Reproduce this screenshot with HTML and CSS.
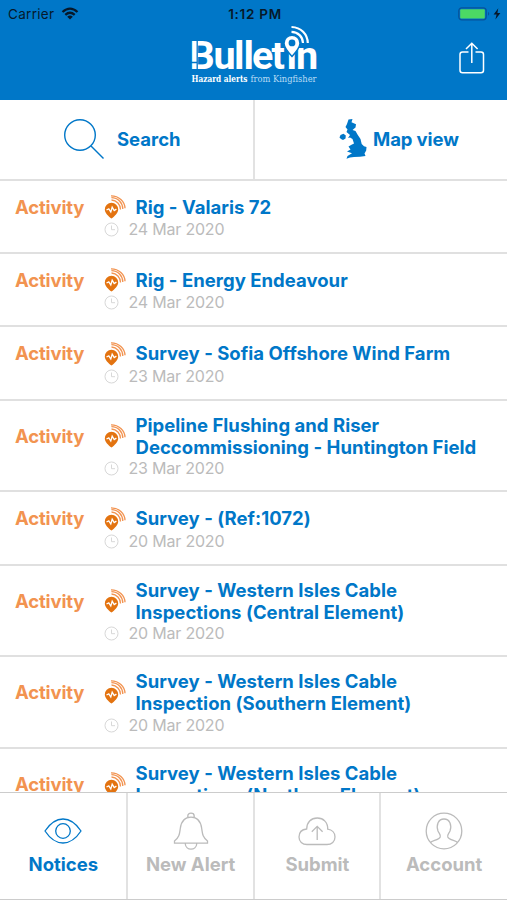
FILE: index.html
```html
<!DOCTYPE html>
<html lang="en">
<head>
  <meta charset="utf-8">
  <title>Bulletin</title>
  <link rel="stylesheet" href="styles.css">
</head>
<body>
  <!-- shared icons -->
  <svg class="sprite">
    <symbol id="icon-pin" viewBox="0 0 22 24">
      <path d="M7.500 7.800a6.700 6.700 0 0 1 6.700 6.700c0 3.500-3.600 6.700-6.700 9.100C4.400 21.200.8 18 .8 14.500A6.700 6.700 0 0 1 7.500 7.800z" fill="#e37310"/>
      <path d="M2.500 15l2.300-1.200 2 3.200 1.400-4.800 2 3.300 2.200-1.400" fill="none" stroke="#fff" stroke-width="1.300"/>
      <path d="M7.500 5a9.500 9.500 0 0 1 9 9.600M7.400 2.700C14 2.800 18.700 7.500 18.800 14M7 .8C14.800.7 20.900 6.500 21 13.300" fill="none" stroke="#f29350" stroke-width="1.300"/>
    </symbol>
    <symbol id="icon-clock" viewBox="0 0 15 15">
      <circle cx="7.500" cy="7.500" r="6.500" fill="none" stroke="#d8d8d8"/>
      <path d="M7.500 3.500v4.200h3.500" fill="none" stroke="#d8d8d8"/>
    </symbol>
  </svg>

  <div class="app">
    <header class="header">
      <div class="status-bar">
        <div class="carrier">
          <span>Carrier</span>
          <svg class="wifi" viewBox="0 0 18 13">
            <path d="M1.500 5Q9-1.800 16.500 5M4.300 7.900Q9 3.700 13.700 7.900" fill="none" stroke="#06192b" stroke-width="2.300"/>
            <path d="M6.200 9.700Q9 7.400 11.800 9.700L9 12.600z" fill="#06192b"/>
          </svg>
        </div>
        <span class="time">1:12 PM</span>
        <svg class="battery" viewBox="0 0 44 14">
          <rect x=".8" y=".8" width="27.400" height="12" rx="3" fill="none" stroke="#07539a" stroke-width="1.300"/>
          <rect x="2.200" y="2.200" width="24.600" height="9.200" rx="1" fill="#4cd964"/>
          <path d="M30 4.800q2.500 2 0 4z" fill="#07539a"/>
          <path d="M40.300 1.200L35.600 7.500h3l-1.200 5 5-6.600h-3z" fill="#06192b"/>
        </svg>
      </div>
      <div class="title-bar">
        <svg class="logo" viewBox="0 0 128 60">
          <text class="logo-name" x="-.5 23.500 44 53.500 62 81.500 96.500 106" y="45">Bulletin</text>
          <path d="M7.200 14v32M0 38.500h7.500" stroke="#0077c8" stroke-width="1.300"/>
          <path d="M102 32.500c-4.400-4.900-8-9-8-13.300a8 8 0 0 1 16 0c0 4.300-3.600 8.400-8 13.300z" fill="#fff" stroke="#0077c8" stroke-width="1.500"/>
          <circle cx="102" cy="18.900" r="3.400" fill="#0077c8"/>
          <path d="M101.500 7.800c6.500.2 11.300 5 11.500 11.200M101.500 3c9.500.3 16 7 16.300 16" fill="none" stroke="#fff" stroke-width="2.200"/>
          <text class="logo-tag strong" x="1.500" y="57.500" textLength="56" lengthAdjust="spacingAndGlyphs">Hazard alerts</text>
          <text class="logo-tag" x="60.500" y="57.500" textLength="66" lengthAdjust="spacingAndGlyphs">from Kingfisher</text>
        </svg>
        <svg class="share" viewBox="0 0 26 32">
          <path d="M9.500 10H3.500Q1 10 1 12.500v15.700q0 2.500 2.500 2.500h18.500q2.500 0 2.500-2.500V12.500q0-2.500-2.500-2.500H16.500M12.800 21V1.200M7 7l5.800-5.800L18.600 7" fill="none" stroke="#fff" stroke-width="1.500"/>
        </svg>
      </div>
    </header>

    <nav class="actions">
      <a class="action search">
        <svg viewBox="0 0 40 40">
          <circle cx="16" cy="16" r="15.300"/>
          <path d="M27 27l12.500 12.500"/>
        </svg>
        <span>Search</span>
      </a>
      <a class="action map">
        <svg viewBox="0 0 28 40">
          <path d="M9.500.5L13.500 0l-1 3.200 4.500 2-.5 3.300-3 2.500 3 1 2 3.500 3 4.500 1.200 5 2.300 2.200 2.500.8-.3 3.500-1.700 3 1 2.500-5.500.8-6 .2-4 .5-3.500 1.200 1-2.700 4.500-2.700-5-1.800 3.500-2-2-3 3-1.800 2.500-1.200-1.500-4.500-2.500-1.500-2 .5 2-3L7.500 13l1-2.500-2-2.500L8 5z"/>
          <path d="M1.500 16l3-1.200 2.300 1.700-.3 3-2.500 1.500-2-1L.5 18.500z"/>
        </svg>
        <span>Map view</span>
      </a>
    </nav>

    <main class="notices">
      <div class="notice">
        <span class="type">Activity</span>
        <svg class="pin"><use href="#icon-pin"/></svg>
        <h2>Rig - Valaris 72</h2>
        <svg class="clock"><use href="#icon-clock"/></svg>
        <span class="date">24 Mar 2020</span>
      </div>
      <div class="notice">
        <span class="type">Activity</span>
        <svg class="pin"><use href="#icon-pin"/></svg>
        <h2>Rig - Energy Endeavour</h2>
        <svg class="clock"><use href="#icon-clock"/></svg>
        <span class="date">24 Mar 2020</span>
      </div>
      <div class="notice">
        <span class="type">Activity</span>
        <svg class="pin"><use href="#icon-pin"/></svg>
        <h2>Survey - Sofia Offshore Wind Farm</h2>
        <svg class="clock"><use href="#icon-clock"/></svg>
        <span class="date">23 Mar 2020</span>
      </div>
      <div class="notice tall">
        <span class="type">Activity</span>
        <svg class="pin"><use href="#icon-pin"/></svg>
        <h2>Pipeline Flushing and Riser<br>Deccommissioning - Huntington Field</h2>
        <svg class="clock"><use href="#icon-clock"/></svg>
        <span class="date">23 Mar 2020</span>
      </div>
      <div class="notice">
        <span class="type">Activity</span>
        <svg class="pin"><use href="#icon-pin"/></svg>
        <h2>Survey - (Ref:1072)</h2>
        <svg class="clock"><use href="#icon-clock"/></svg>
        <span class="date">20 Mar 2020</span>
      </div>
      <div class="notice tall">
        <span class="type">Activity</span>
        <svg class="pin"><use href="#icon-pin"/></svg>
        <h2>Survey - Western Isles Cable<br>Inspections (Central Element)</h2>
        <svg class="clock"><use href="#icon-clock"/></svg>
        <span class="date">20 Mar 2020</span>
      </div>
      <div class="notice tall">
        <span class="type">Activity</span>
        <svg class="pin"><use href="#icon-pin"/></svg>
        <h2>Survey - Western Isles Cable<br>Inspection (Southern Element)</h2>
        <svg class="clock"><use href="#icon-clock"/></svg>
        <span class="date">20 Mar 2020</span>
      </div>
      <div class="notice tall">
        <span class="type">Activity</span>
        <svg class="pin"><use href="#icon-pin"/></svg>
        <h2>Survey - Western Isles Cable<br>Inspections (Northern Element)</h2>
      </div>
    </main>

    <footer class="tabs">
      <a class="tab active">
        <svg viewBox="0 0 38 38">
          <path d="M1 19Q9 7 19 7t18 12Q29 31 19 31T1 19z"/>
          <circle cx="19" cy="19" r="7.300"/>
        </svg>
        <span>Notices</span>
      </a>
      <a class="tab">
        <svg viewBox="0 0 38 38">
          <path d="M15.800 5.200V4q0-2.800 3.200-2.800T22.200 4v1.200M2.500 31.200v-2.200C7.500 25 7.500 22 8.300 16.500 9.200 9.500 12 5.200 19 5.200s9.800 4.300 10.700 11.300C30.500 22 30.500 25 35.500 29v2.200zM13.200 31.500c.5 7.400 11.100 7.400 11.600 0"/>
        </svg>
        <span>New Alert</span>
      </a>
      <a class="tab">
        <svg viewBox="0 0 38 38">
          <path d="M9 32.500h20c4.700 0 8-3 8-7.500 0-4.200-3-7.300-7.300-7.800C30 10.500 25.500 6 19.300 6 13 6 8.700 10.500 8.700 17 4 17.500 1 20.600 1 25c0 4.500 3.300 7.500 8 7.500zM19.200 28V14.500M13.800 19.700l5.400-5.400 5.400 5.400"/>
        </svg>
        <span>Submit</span>
      </a>
      <a class="tab">
        <svg viewBox="0 0 38 38">
          <circle cx="19" cy="19" r="17.800"/>
          <path d="M5.500 30.500c1.500-2 8.500-2.500 9.700-5.500.7-2.500-1.200-3.500-2.200-6-2-6 .2-12 6-12s8 6 6 12c-1 2.500-2.900 3.500-2.200 6 1.200 3 8.200 3.500 9.700 5.500"/>
        </svg>
        <span>Account</span>
      </a>
    </footer>
  </div>
</body>
</html>
```
FILE: styles.css
```css
* {
  box-sizing: border-box;
}

body {
  margin: 0;
  background: #fff;
  font-family: Inter, "Liberation Sans", sans-serif;
  color: #0077c8;
}

.sprite {
  display: none;
}

.app {
  display: flex;
  flex-direction: column;
  height: 900px;
  overflow: hidden;
}

.header {
  flex: none;
  height: 99.5px;
  background: #0077c8;
}

.status-bar {
  display: grid;
  grid-template-columns: 1fr auto 1fr;
  align-items: center;
  height: 27px;
  padding: 0 5px 0 8px;
  color: #06192b;
  font-size: 13.5px;
}

.carrier {
  display: flex;
  align-items: center;
  gap: 7px;
  letter-spacing: 0.3px;
}

.wifi {
  width: 18px;
  height: 13px;
}

.time {
  font-weight: 600;
  letter-spacing: 0.7px;
}

.battery {
  justify-self: end;
  width: 44px;
  height: 14px;
}

.title-bar {
  display: grid;
  grid-template-columns: 1fr 128px 1fr;
  padding: 0 22px 0 23px;
}

.logo {
  grid-column: 2;
  width: 128px;
  height: 60px;
  overflow: visible;
  margin-top: -3px;
}

.logo-name {
  font-family: Roboto, sans-serif;
  font-size: 39.5px;
  font-weight: 700;
  fill: #fff;
}

.logo-tag {
  font-family: "DejaVu Serif", serif;
  font-size: 9px;
  fill: #b9dcf5;
}

.logo-tag.strong {
  font-weight: 700;
  fill: #fff;
}

.share {
  justify-self: end;
  width: 26px;
  height: 32px;
  margin-top: 15px;
}

.actions {
  display: grid;
  grid-template-columns: 255px 1fr;
  flex: none;
  height: 81px;
  border-bottom: 2px solid #e0e0e0;
}

.action {
  display: flex;
  align-items: center;
  font-size: 18.5px;
  font-weight: 650;
}

.search {
  padding-left: 64px;
  gap: 13px;
  border-right: 2px solid #e2e2e2;
}

.map {
  padding-left: 84px;
  gap: 6px;
  letter-spacing: -0.1px;
}

.search svg {
  width: 40px;
  height: 40px;
  fill: none;
  stroke: #0077c8;
  stroke-width: 1.4;
}

.map svg {
  width: 28px;
  height: 40px;
  fill: #0077c8;
}

.notices {
  flex: 1;
  min-height: 0;
  overflow: hidden;
}

.notice {
  display: grid;
  grid-template-columns: 89.5px 31px 1fr;
  align-content: start;
  align-items: center;
  row-gap: 1px;
  height: 73.4px;
  padding: 15.2px 0 0 15px;
  border-bottom: 2px solid #e0e0e0;
}

.notice.tall {
  row-gap: 0;
  height: 91.5px;
  padding-top: 13px;
}

.type {
  color: #f29350;
  font-size: 18.5px;
  font-weight: 650;
  line-height: 22.4px;
  letter-spacing: -0.15px;
}

.pin {
  width: 22px;
  height: 24px;
  margin: -1px 0 -1px -1px;
}

.notice h2 {
  margin: 0;
  font-size: 18.5px;
  font-weight: 650;
  line-height: 22.4px;
  letter-spacing: 0.03px;
  white-space: nowrap;
}

.clock {
  grid-column: 2;
  width: 15px;
  height: 15px;
  margin-left: -1px;
}

.date {
  margin-left: -7px;
  color: #bbb;
  font-size: 16px;
  line-height: 21px;
  letter-spacing: -0.2px;
}

.tabs {
  display: grid;
  grid-template-columns: repeat(4, 1fr);
  flex: none;
  height: 108px;
  border-top: 1px solid #ccc;
  border-bottom: 1px solid #ccc;
}

.tab {
  display: flex;
  flex-direction: column;
  align-items: center;
  padding-top: 19px;
  color: #bbb;
  font-size: 18.5px;
  font-weight: 650;
}

.tab + .tab {
  border-left: 2px solid #e2e2e2;
  margin-left: -1px;
}

.tab svg {
  width: 38px;
  height: 38px;
  margin-bottom: 3px;
  fill: none;
  stroke: currentColor;
  stroke-width: 1.3;
}

.tab.active {
  color: #0077c8;
}
```
